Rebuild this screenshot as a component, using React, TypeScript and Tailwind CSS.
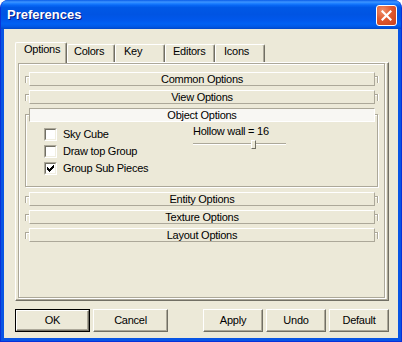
import React from "react";

const CHECK = [
  "......#",
  ".....##",
  "#...###",
  "##.###.",
  "#####..",
  ".###...",
  "..#....",
];

function CheckMark() {
  const rects: React.ReactElement[] = [];
  CHECK.forEach((row, y) =>
    row.split("").forEach((c, x) => {
      if (c === "#") rects.push(<rect key={`${x}-${y}`} x={x} y={y} width={1} height={1} fill="#000" />);
    })
  );
  return (
    <svg width="7" height="7" viewBox="0 0 7 7" shapeRendering="crispEdges">
      {rects}
    </svg>
  );
}

function Checkbox({ label, checked }: { label: string; checked?: boolean }) {
  return (
    <div className="flex items-center h-[13px] gap-[6px]">
      <div className="w-[13px] h-[13px] border border-t-[#ACA899] border-l-[#ACA899] border-b-white border-r-white">
        <div className="w-full h-full bg-white border border-t-[#716F64] border-l-[#716F64] border-b-[#F1EFE2] border-r-[#F1EFE2] flex items-center justify-center">
          {checked ? <CheckMark /> : null}
        </div>
      </div>
      <span className="leading-[13px]">{label}</span>
    </div>
  );
}

function Bar({ label, pressed }: { label: string; pressed?: boolean }) {
  return (
    <div
      className={
        pressed
          ? "w-[346px] h-[14px] shrink-0 flex items-center justify-center leading-[12px] bg-[#F8F7F3] border border-t-[#ACA899] border-l-[#ACA899] border-b-white border-r-white"
          : "w-[346px] h-[14px] shrink-0 flex items-center justify-center leading-[12px] bg-[#ECE9D8] border border-t-white border-l-white border-b-[#ACA899] border-r-[#ACA899]"
      }
    >
      {label}
    </div>
  );
}

function Collapsed({ label, className = "" }: { label: string; className?: string }) {
  return (
    <div className={`flex h-[14px] ${className}`}>
      <div className="w-[4px] h-[7px] mt-[4px] border-t border-l border-[#ACA899] shadow-[inset_1px_1px_0_white]" />
      <Bar label={label} />
      <div className="w-[3px] h-[7px] mt-[4px] border-t border-r border-[#ACA899] shadow-[inset_0_1px_0_white,1px_0_0_white]" />
    </div>
  );
}

function Button({ label, def, w }: { label: string; def?: boolean; w: string }) {
  const inner = (
    <div className="w-full h-full flex items-center justify-center bg-[#ECE9D8] border border-t-white border-l-white border-b-[#716F64] border-r-[#716F64] shadow-[inset_-1px_-1px_0_#ACA899]">
      {label}
    </div>
  );
  return (
    <div className={`${w} h-[23px] ${def ? "border border-black" : ""}`}>{inner}</div>
  );
}

const TABS = [
  { label: "Options", cls: "w-[52px] pl-[8px] h-[21px] -mb-[1px] z-10", sel: true },
  { label: "Colors", cls: "w-[48px] pl-[6px] h-[18px]", sel: false },
  { label: "Key", cls: "w-[50px] pl-[8px] h-[18px]", sel: false },
  { label: "Editors", cls: "w-[50px] pl-[7px] h-[18px]", sel: false },
  { label: "Icons", cls: "w-[50px] pl-[8px] h-[18px]", sel: false },
];

export default function App() {
  return (
    <div className="w-[402px] h-[342px] bg-white font-['Liberation_Sans',Arial,sans-serif] text-[11px] leading-[13px] tracking-[-0.25px] text-black select-none">
      <div className="flex flex-col w-full h-full rounded-t-[8px] overflow-hidden bg-[#0855E4] border-x border-b border-[#0831D9]">
        {/* Title bar */}
        <div className="h-[29px] shrink-0 flex items-start justify-between bg-[linear-gradient(180deg,#0A5CE8_0%,#3D95FF_7%,#1E80FF_12%,#0868F5_18%,#0058E6_26%,#0054E3_50%,#0058EC_70%,#0061F3_82%,#0058E6_92%,#0048C8_100%)]">
          <div className="pl-[6px] pt-[8px] text-white font-bold text-[13px] leading-[13px] tracking-[0px] [text-shadow:1px_1px_0_#0A1883]">
            Preferences
          </div>
          <div className="mt-[5px] mr-[4px] w-[21px] h-[21px] rounded-[3px] border border-white bg-[radial-gradient(circle_at_30%_25%,#F0906A_0%,#E0592F_45%,#C8411C_100%)] flex items-center justify-center">
            <svg width="11" height="11" viewBox="0 0 11 11">
              <path d="M1.5 1.5 L9.5 9.5 M9.5 1.5 L1.5 9.5" stroke="white" strokeWidth="2.2" strokeLinecap="square" />
            </svg>
          </div>
        </div>

        {/* Body */}
        <div className="flex-1 mx-[3px] mb-[3px] bg-[#ECE9D8] flex flex-col pt-[13px] pl-[11px]">
          {/* Tabs */}
          <div className="flex items-end h-[20px]">
            {TABS.map((t) => (
              <div
                key={t.label}
                className={`relative ${t.cls} bg-[#ECE9D8] rounded-t-[2px] border-t border-l border-white border-r border-r-[#716F64] shadow-[inset_-1px_0_0_#ACA899] leading-[13px]`}
              >
                {t.label}
              </div>
            ))}
          </div>

          {/* Page */}
          <div className="w-[374px] h-[239px] border-t border-l border-white border-r border-b border-r-[#716F64] border-b-[#716F64] shadow-[inset_-1px_-1px_0_#ACA899]">
            <div className="ml-[2px] w-[367px] h-[235px] border border-[#ACA899] shadow-[inset_1px_1px_0_white,1px_1px_0_white] pt-[8px] pl-[6px] flex flex-col">
              <Collapsed label="Common Options" />
              <Collapsed label="View Options" className="mt-[4px]" />

              {/* Expanded group */}
              <div className="mt-[10px] w-[353px] h-[73px] border border-[#ACA899] shadow-[inset_1px_1px_0_white,1px_1px_0_white] flex flex-col">
                <div className="-mt-[7px] ml-[3px]">
                  <Bar label="Object Options" pressed />
                </div>
                <div className="flex mt-[3px]">
                  <div className="w-[167px] pl-[18px] pt-[3px] flex flex-col gap-[4px]">
                    <Checkbox label="Sky Cube" />
                    <Checkbox label="Draw top Group" />
                    <Checkbox label="Group Sub Pieces" checked />
                  </div>
                  <div className="flex flex-col">
                    <div className="leading-[13px]">Hollow wall = 16</div>
                    <div className="relative w-[93px] h-[9px] mt-[2px]">
                      <div className="mt-[3px] h-[2px] border-t border-t-[#ACA899] border-b border-b-white" />
                      <div className="absolute left-[58px] top-0 w-[5px] h-[9px] bg-[#ECE9D8] border border-t-white border-l-white border-b-[#716F64] border-r-[#716F64]" />
                    </div>
                  </div>
                </div>
              </div>

              <Collapsed label="Entity Options" className="mt-[5px]" />
              <Collapsed label="Texture Options" className="mt-[4px]" />
              <Collapsed label="Layout Options" className="mt-[4px]" />
            </div>
          </div>

          {/* Buttons */}
          <div className="w-[374px] mt-[8px] flex justify-between">
            <div className="flex gap-[3px]">
              <Button label="OK" def w="w-[75px]" />
              <Button label="Cancel" w="w-[75px]" />
            </div>
            <div className="flex gap-[3px]">
              <Button label="Apply" w="w-[60px]" />
              <Button label="Undo" w="w-[60px]" />
              <Button label="Default" w="w-[60px]" />
            </div>
          </div>
        </div>
      </div>
    </div>
  );
}
